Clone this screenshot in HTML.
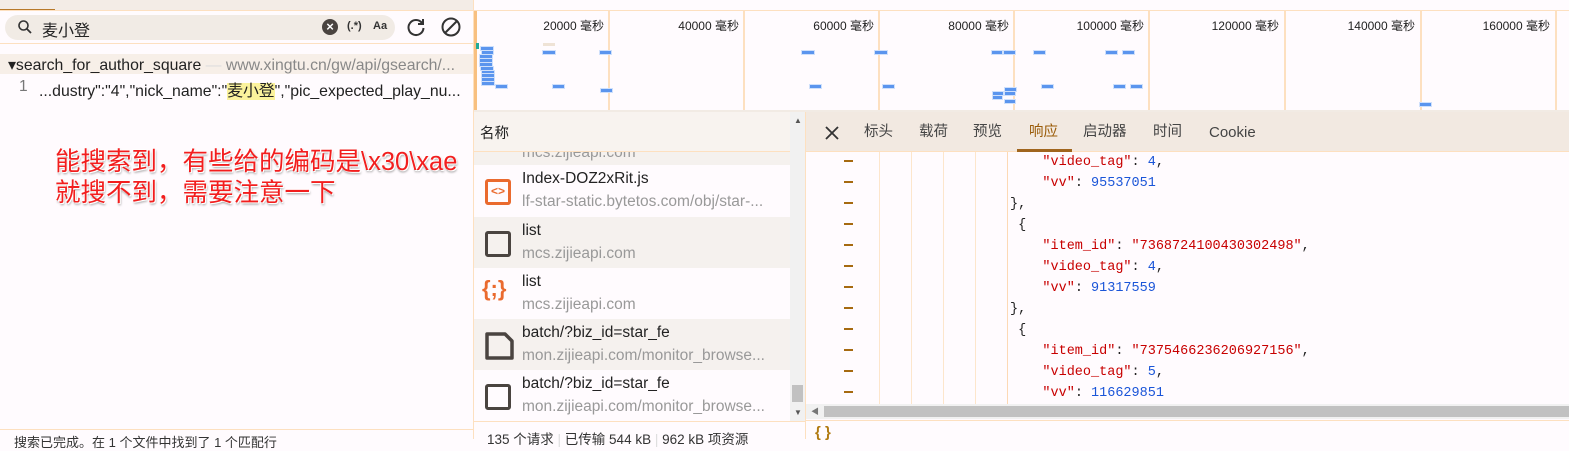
<!DOCTYPE html>
<html><head><meta charset="utf-8"><style>
*{margin:0;padding:0;box-sizing:border-box}
body{width:1569px;height:439px;overflow:hidden;background:#fffbfe;font-family:"Liberation Sans","Noto Sans CJK SC",sans-serif;position:relative;font-size:13px;color:#222}
.a{position:absolute}
.bar{position:absolute;height:3px;background:#5b95ee;box-shadow:0 0 0 1px #cfe0fb}
.vl{position:absolute;top:10px;height:100px;width:2px;background:#fde0c0}
.lbl{position:absolute;top:17px;font-size:12px;color:#222;text-align:right;width:120px}
.row{position:absolute;left:474px;width:316px;height:51px}
.row .t{position:absolute;left:48px;top:5px;font-size:15.5px;color:#222}
.row .s{position:absolute;left:48px;top:28px;font-size:15.5px;color:#999}
.ic{position:absolute;left:11px;top:14px;width:26px;height:26px;border:3.5px solid #4a4440;border-radius:3px}
.tab{position:absolute;top:122px;font-size:14.5px;line-height:20px;color:#444}
.ln{position:absolute;left:844px;width:9px;height:1.5px;background:#a66a10}
.code{position:absolute;font-family:"Liberation Mono","Noto Sans CJK SC",monospace;font-size:13.5px;white-space:pre}
.k{color:#c80000}.n{color:#1a55d8}
.g{position:absolute;top:152px;height:252px;width:1px;background:#fde6cc}
</style></head><body>
<div class="a" style="left:0;top:0;width:473px;height:10px;background:#f3ece6"></div>
<div class="a" style="left:0;top:9px;width:55px;height:2px;background:#b7792a"></div>
<div class="a" style="left:0;top:10px;width:473px;height:1px;background:#fde0c0"></div>
<div class="a" style="left:5px;top:15px;width:390px;height:25px;border-radius:13px;background:#f1ebe5"></div>
<svg class="a" style="left:17px;top:19px" width="16" height="16" viewBox="0 0 16 16"><circle cx="6.5" cy="6.5" r="4.5" fill="none" stroke="#333" stroke-width="1.6"/><path d="M10 10l4 4" stroke="#333" stroke-width="1.8"/></svg>
<div class="a" style="left:42px;top:17px;font-size:16px;color:#222">麦小登</div>
<div class="a" style="left:322px;top:19px;width:16px;height:16px;border-radius:50%;background:#4a4440;color:#fff;font-size:13px;line-height:16px;text-align:center;font-weight:bold">×</div>
<div class="a" style="left:347px;top:20px;font-size:11px;font-weight:bold;color:#333">(.*)</div>
<div class="a" style="left:373px;top:20px;font-size:11px;font-weight:bold;color:#333">Aa</div>
<svg class="a" style="left:405px;top:16px" width="22" height="22" viewBox="0 0 22 22"><path d="M17 7A7.5 7.5 0 1 0 18.5 12" fill="none" stroke="#333" stroke-width="2"/><path d="M18 3v5h-5" fill="none" stroke="#333" stroke-width="2"/></svg>
<svg class="a" style="left:440px;top:16px" width="22" height="22" viewBox="0 0 22 22"><circle cx="11" cy="11" r="8.5" fill="none" stroke="#333" stroke-width="2"/><path d="M5 17L17 5" stroke="#333" stroke-width="2"/></svg>
<div class="a" style="left:0;top:43px;width:473px;height:1px;background:#fde0c0"></div>
<div class="a" style="left:0;top:54px;width:473px;height:20px;background:#f7efe8"></div>
<div class="a" style="left:8px;top:55px;font-size:15.8px;color:#222;white-space:nowrap">▾search_for_author_square <span style="color:#ddd">—</span> <span style="color:#888">www.xingtu.cn/gw/api/gsearch/...</span></div>
<div class="a" style="left:19px;top:78px;font-size:15.5px;color:#777">1</div>
<div class="a" style="left:39px;top:78px;font-size:15.8px;color:#222;white-space:nowrap">...dustry":"4","nick_name":"<span style="background:#fbf29c">麦小登</span>","pic_expected_play_nu...</div>
<div class="a" style="left:55px;top:147px;font-size:25.5px;line-height:31px;color:#f21e1e;white-space:nowrap;text-shadow:1px 1px 0 #fff,-1px -1px 0 #fff,1px 2px 2px #999">能搜索到，有些给的编码是\x30\xae<br>就搜不到，需要注意一下</div>
<div class="a" style="left:0;top:429px;width:473px;height:1px;background:#fde0c0"></div>
<div class="a" style="left:14px;top:432px;font-size:13px;color:#333">搜索已完成。在 1 个文件中找到了 1 个匹配行</div>
<div class="a" style="left:473px;top:0;width:1px;height:439px;background:#fde0c0"></div>
<div class="a" style="left:474px;top:10px;width:1095px;height:1px;background:#fde0c0"></div>
<div class="a" style="left:474px;top:11px;width:3px;height:99px;background:#f8c080"></div>
<div class="a" style="left:474px;top:110px;width:1095px;height:2px;background:#f2ebe4"></div>
<div class="vl" style="left:608px"></div><div class="vl" style="left:743px"></div><div class="vl" style="left:878px"></div><div class="vl" style="left:1013px"></div><div class="vl" style="left:1148px"></div><div class="vl" style="left:1284px"></div><div class="vl" style="left:1420px"></div><div class="vl" style="left:1555px"></div>
<div class="lbl" style="left:484px">20000 毫秒</div><div class="lbl" style="left:619px">40000 毫秒</div><div class="lbl" style="left:754px">60000 毫秒</div><div class="lbl" style="left:889px">80000 毫秒</div><div class="lbl" style="left:1024px">100000 毫秒</div><div class="lbl" style="left:1159px">120000 毫秒</div><div class="lbl" style="left:1295px">140000 毫秒</div><div class="lbl" style="left:1430px">160000 毫秒</div>
<div class="a" style="left:476px;top:43px;width:3px;height:6px;background:#2a9"></div>
<div class="bar" style="left:481px;top:47px;width:12px"></div><div class="bar" style="left:482px;top:51px;width:11px"></div><div class="bar" style="left:480px;top:55px;width:12px"></div><div class="bar" style="left:480px;top:59px;width:12px"></div><div class="bar" style="left:480px;top:63px;width:12px"></div><div class="bar" style="left:481px;top:67px;width:12px"></div><div class="bar" style="left:482px;top:71px;width:12px"></div><div class="bar" style="left:482px;top:74px;width:12px"></div><div class="bar" style="left:482px;top:78px;width:12px"></div><div class="bar" style="left:482px;top:82px;width:12px"></div><div class="bar" style="left:496px;top:85px;width:11px"></div>
<div class="a" style="left:543px;top:43px;width:12px;height:3px;background:#efe3d6"></div>
<div class="bar" style="left:543px;top:51px;width:12px"></div><div class="bar" style="left:553px;top:85px;width:11px"></div><div class="bar" style="left:600px;top:51px;width:11px"></div><div class="bar" style="left:601px;top:89px;width:11px"></div>
<div class="bar" style="left:802px;top:51px;width:12px"></div><div class="bar" style="left:810px;top:85px;width:11px"></div><div class="bar" style="left:875px;top:51px;width:12px"></div><div class="bar" style="left:883px;top:85px;width:11px"></div>
<div class="bar" style="left:992px;top:51px;width:10px"></div><div class="bar" style="left:1004px;top:51px;width:11px"></div><div class="bar" style="left:993px;top:92px;width:10px"></div><div class="bar" style="left:1005px;top:88px;width:11px"></div><div class="bar" style="left:1005px;top:92px;width:10px"></div><div class="bar" style="left:1005px;top:100px;width:10px"></div><div class="bar" style="left:993px;top:96px;width:9px"></div>
<div class="bar" style="left:1034px;top:51px;width:11px"></div><div class="bar" style="left:1042px;top:85px;width:11px"></div><div class="bar" style="left:1106px;top:51px;width:11px"></div><div class="bar" style="left:1123px;top:51px;width:11px"></div><div class="bar" style="left:1114px;top:85px;width:11px"></div><div class="bar" style="left:1131px;top:85px;width:11px"></div><div class="bar" style="left:1420px;top:103px;width:11px"></div>
<div class="a" style="left:474px;top:112px;width:316px;height:40px;background:#f8f3ef;border-bottom:1px solid #fde0c0"></div>
<div class="a" style="left:480px;top:122px;font-size:14.5px;color:#222">名称</div>
<div class="a" style="left:474px;top:152px;width:316px;height:13px;background:#f5f1ee;overflow:hidden"><div style="position:absolute;left:48px;top:-8px;font-size:15.5px;color:#999">mcs.zijieapi.com</div></div>
<div class="row" style="top:165px;background:#fffbfe"><div class="ic" style="border-color:#ea6a2e"></div><div class="a" style="left:17px;top:19px;color:#ea6a2e;font-weight:bold;font-size:12px">&lt;&gt;</div><div class="t">Index-DOZ2xRit.js</div><div class="s">lf-star-static.bytetos.com/obj/star-...</div></div>
<div class="row" style="top:217px;background:#f5f1ee"><div class="ic"></div><div class="t">list</div><div class="s">mcs.zijieapi.com</div></div>
<div class="row" style="top:268px;background:#fffbfe"><div class="a" style="left:8px;top:8px;color:#ea6a2e;font-weight:bold;font-size:22px">{;}</div><div class="t">list</div><div class="s">mcs.zijieapi.com</div></div>
<div class="row" style="top:319px;background:#f5f1ee"><svg class="a" style="left:11px;top:13px" width="30" height="28" viewBox="0 0 30 28"><path d="M2 2H20L27 9V26H2Z" fill="none" stroke="#4a4440" stroke-width="3.5" stroke-linejoin="round"/></svg><div class="t">batch/?biz_id=star_fe</div><div class="s">mon.zijieapi.com/monitor_browse...</div></div>
<div class="row" style="top:370px;background:#fffbfe"><div class="ic"></div><div class="t">batch/?biz_id=star_fe</div><div class="s">mon.zijieapi.com/monitor_browse...</div></div>
<div class="a" style="left:790px;top:112px;width:15px;height:309px;background:#f1f1f1"></div>
<div class="a" style="left:792px;top:385px;width:11px;height:17px;background:#c1c1c1"></div>
<div class="a" style="left:794px;top:116px;font-size:8px;color:#555">▲</div>
<div class="a" style="left:794px;top:408px;font-size:8px;color:#555">▼</div>
<div class="a" style="left:474px;top:421px;width:332px;height:1px;background:#fde0c0"></div>
<div class="a" style="left:487px;top:428px;font-size:13.5px;color:#333;white-space:nowrap">135 个请求 <span style="color:#ddd">|</span> 已传输 544 kB <span style="color:#ddd">|</span> 962 kB 项资源</div>
<div class="a" style="left:805px;top:112px;width:1px;height:327px;background:#fde0c0"></div>
<div class="a" style="left:806px;top:112px;width:763px;height:40px;background:#f2e9e1;border-bottom:1px solid #fde0c0"></div>
<svg class="a" style="left:825px;top:126px" width="14" height="14"><path d="M1 1L13 13M13 1L1 13" stroke="#333" stroke-width="1.8"/></svg>
<div class="tab" style="left:864px">标头</div><div class="tab" style="left:919px">载荷</div><div class="tab" style="left:973px">预览</div><div class="tab" style="left:1029px;color:#9a5b08">响应</div><div class="tab" style="left:1083px">启动器</div><div class="tab" style="left:1153px">时间</div><div class="tab" style="left:1209px;top:123px;font-size:15px">Cookie</div>
<div class="a" style="left:1017px;top:149px;width:55px;height:3px;background:#a0651e"></div>
<div class="g" style="left:879px"></div><div class="g" style="left:911px"></div><div class="g" style="left:943px"></div><div class="g" style="left:975px"></div><div class="g" style="left:1007px;background:#fdd9b5"></div>
<div class="ln" style="top:160px"></div><div class="ln" style="top:181px"></div><div class="ln" style="top:202px"></div><div class="ln" style="top:223px"></div><div class="ln" style="top:244px"></div><div class="ln" style="top:265px"></div><div class="ln" style="top:286px"></div><div class="ln" style="top:307px"></div><div class="ln" style="top:328px"></div><div class="ln" style="top:349px"></div><div class="ln" style="top:370px"></div><div class="ln" style="top:391px"></div>
<div class="code" style="left:1010px;top:152px;line-height:21px;color:#222"><span class="k">    "video_tag"</span>: <span class="n">4</span>,
<span class="k">    "vv"</span>: <span class="n">95537051</span>
},
 {
<span class="k">    "item_id"</span>: <span class="k">"7368724100430302498"</span>,
<span class="k">    "video_tag"</span>: <span class="n">4</span>,
<span class="k">    "vv"</span>: <span class="n">91317559</span>
},
 {
<span class="k">    "item_id"</span>: <span class="k">"7375466236206927156"</span>,
<span class="k">    "video_tag"</span>: <span class="n">5</span>,
<span class="k">    "vv"</span>: <span class="n">116629851</span></div>
<div class="a" style="left:806px;top:404px;width:763px;height:15px;background:#f1f1f1"></div>
<div class="a" style="left:824px;top:406px;width:745px;height:11px;background:#c1c1c1"></div>
<div class="a" style="left:811px;top:406px;font-size:8px;color:#777">◀</div>
<div class="a" style="left:806px;top:420px;width:763px;height:1px;background:#fde0c0"></div>
<div class="a" style="left:815px;top:424px;font-size:15px;font-weight:bold;color:#b07a10">{ }</div>
</body></html>
